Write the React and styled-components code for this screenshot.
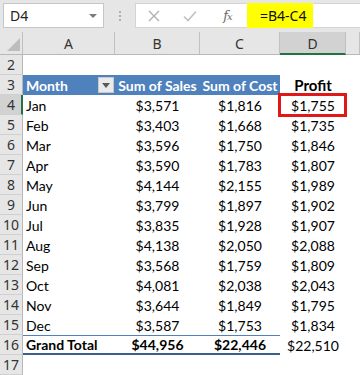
import React from "react";
import styled, { createGlobalStyle, css } from "styled-components";

const Global = createGlobalStyle`
  html, body { margin: 0; padding: 0; background: #ffffff; }
  body { width: 360px; height: 375px; overflow: hidden; font-family: "Lato", "Noto Sans", sans-serif; }
`;

const Page = styled.div`
  width: 360px;
  height: 375px;
  overflow: hidden;
  display: flex;
  flex-direction: column;
`;

const TopBar = styled.div`
  height: 36px;
  background: #e6e6e6;
  display: flex;
  align-items: flex-start;
  padding: 3px 0 0 3px;
  box-sizing: border-box;
`;

const NameBox = styled.div`
  width: 101px;
  height: 25px;
  box-sizing: border-box;
  background: #fff;
  border: 1px solid #c6c6c6;
  display: flex;
  align-items: center;
  justify-content: space-between;
  padding: 0 6px 0 6px;
  font-family: "Noto Sans", "Open Sans", sans-serif;
  font-size: 14px;
  color: #222;
`;

const Caret = styled.span`
  width: 0;
  height: 0;
  border-left: 4px solid transparent;
  border-right: 4px solid transparent;
  border-top: 4px solid #7a7a7a;
`;

const Dots = styled.div`
  width: 31px;
  height: 25px;
  display: flex;
  flex-direction: column;
  align-items: center;
  justify-content: center;
  gap: 2px;
  & > span { width: 2px; height: 2px; background: #b0b0b0; }
`;

const FormulaBar = styled.div`
  flex: 1;
  height: 25px;
  box-sizing: border-box;
  background: #fff;
  border: 1px solid #d4d4d4;
  border-right: none;
  display: flex;
  align-items: center;
`;

const IconSlot = styled.div`
  width: ${(p) => p.$w}px;
  height: 23px;
  display: flex;
  align-items: center;
  justify-content: center;
`;

const Fx = styled.span`
  font-family: "DejaVu Serif", "Liberation Serif", serif;
  font-style: italic;
  font-size: 13px;
  color: #6a6a6a;
  letter-spacing: -1px;
  & sub { font-size: 10px; vertical-align: 0; }
`;

const Formula = styled.div`
  height: 25px;
  margin-top: -1px;
  background: #ffff00;
  width: 66px;
  box-sizing: border-box;
  padding-left: 13px;
  display: flex;
  align-items: center;
  font-family: "Noto Sans", "Open Sans", sans-serif;
  font-size: 14px;
  color: #111;
`;

const Grid = styled.div`
  display: grid;
  grid-template-columns: 23px 92px 85px 80px 66px 1fr;
  grid-auto-rows: 20px;
  grid-template-rows: 23px;
  font-family: "Lato", "Noto Sans", sans-serif;
  font-size: 14px;
  color: #000;
`;

const ColHead = styled.div`
  box-sizing: border-box;
  background: ${(p) => (p.$active ? "#d2d2d2" : "#e6e6e6")};
  border-right: 1px solid #c0c0c0;
  border-bottom: ${(p) => (p.$active ? "2px solid #217346" : "1px solid #b8b8b8")};
  display: flex;
  align-items: center;
  justify-content: center;
  font-family: "Noto Sans", "Open Sans", sans-serif;
  font-size: 14px;
  color: #333;
  padding-top: 1px;
`;

const Corner = styled(ColHead)`
  justify-content: flex-end;
  align-items: flex-end;
  padding: 0 2px 3px 0;
`;

const RowHead = styled.div`
  box-sizing: border-box;
  background: ${(p) => (p.$active ? "#d2d2d2" : "#e6e6e6")};
  border-bottom: 1px solid #d0d0d0;
  border-right: ${(p) => (p.$active ? "2px solid #217346" : "1px solid #b8b8b8")};
  display: flex;
  align-items: center;
  justify-content: center;
  font-family: "Noto Sans", "Open Sans", sans-serif;
  font-size: 14px;
  color: #333;
  padding-left: ${(p) => (p.$active ? "1px" : "0")};
`;

const Cell = styled.div`
  box-sizing: border-box;
  position: relative;
  display: flex;
  align-items: center;
  white-space: nowrap;
  padding: 0 3px;
  justify-content: ${(p) => (p.$align === "left" ? "flex-start" : "center")};
  font-weight: ${(p) => (p.$bold ? 700 : 400)};
  font-size: ${(p) => (p.$big ? "15px" : "14px")};
  ${(p) =>
    p.$head &&
    css`
      background: #4f81bd;
      color: #fff;
      font-weight: 700;
    `}
  ${(p) =>
    p.$total &&
    css`
      border-top: 1px solid #4f81bd;
      border-bottom: 2px solid #3d5f8c;
    `}
  ${(p) =>
    p.$selected &&
    css`
      &::after {
        content: "";
        position: absolute;
        left: -2px;
        top: -2px;
        right: -1px;
        bottom: -2px;
        border: 3px solid #e01818;
      }
    `}
`;

const FilterBtn = styled.span`
  position: absolute;
  right: 1px;
  top: 2px;
  width: 16px;
  height: 16px;
  box-sizing: border-box;
  background: #eaeaea;
  border: 1px solid #c8c8c8;
  display: flex;
  align-items: center;
  justify-content: center;
  &::before {
    content: "";
    border-left: 4px solid transparent;
    border-right: 4px solid transparent;
    border-top: 5px solid #595959;
  }
`;

const data = [
  ["Jan", "$3,571", "$1,816", "$1,755"],
  ["Feb", "$3,403", "$1,668", "$1,735"],
  ["Mar", "$3,596", "$1,750", "$1,846"],
  ["Apr", "$3,590", "$1,783", "$1,807"],
  ["May", "$4,144", "$2,155", "$1,989"],
  ["Jun", "$3,799", "$1,897", "$1,902"],
  ["Jul", "$3,835", "$1,928", "$1,907"],
  ["Aug", "$4,138", "$2,050", "$2,088"],
  ["Sep", "$3,568", "$1,759", "$1,809"],
  ["Oct", "$4,081", "$2,038", "$2,043"],
  ["Nov", "$3,644", "$1,849", "$1,795"],
  ["Dec", "$3,587", "$1,753", "$1,834"],
];

export default function App() {
  return (
    <Page>
      <Global />
      <TopBar>
        <NameBox>
          <span>D4</span>
          <Caret />
        </NameBox>
        <Dots>
          <span />
          <span />
          <span />
        </Dots>
        <FormulaBar>
          <IconSlot $w={36}>
            <svg width="12" height="12" viewBox="0 0 12 12">
              <path d="M1 1L11 11M11 1L1 11" stroke="#b0b0b0" strokeWidth="1.4" fill="none" />
            </svg>
          </IconSlot>
          <IconSlot $w={36}>
            <svg width="14" height="12" viewBox="0 0 14 12">
              <path d="M1 6.5L5 10.5L13 1.5" stroke="#c0c0c0" strokeWidth="1.6" fill="none" />
            </svg>
          </IconSlot>
          <IconSlot $w={39}>
            <Fx>
              f<sub>x</sub>
            </Fx>
          </IconSlot>
          <Formula>=B4-C4</Formula>
        </FormulaBar>
      </TopBar>
      <Grid>
        <Corner>
          <svg width="13" height="13" viewBox="0 0 13 13">
            <path d="M13 0L13 13L0 13Z" fill="#bdbdbd" />
          </svg>
        </Corner>
        <ColHead>A</ColHead>
        <ColHead>B</ColHead>
        <ColHead>C</ColHead>
        <ColHead $active>D</ColHead>
        <ColHead />

        <RowHead>2</RowHead>
        <Cell />
        <Cell />
        <Cell />
        <Cell />
        <Cell />

        <RowHead>3</RowHead>
        <Cell $head $align="left">
          Month
          <FilterBtn />
        </Cell>
        <Cell $head>Sum of Sales</Cell>
        <Cell $head>Sum of Cost</Cell>
        <Cell $bold $big>Profit</Cell>
        <Cell />

        {data.map((r, i) => (
          <React.Fragment key={r[0]}>
            <RowHead $active={i === 0}>{i + 4}</RowHead>
            <Cell $align="left">{r[0]}</Cell>
            <Cell>{r[1]}</Cell>
            <Cell>{r[2]}</Cell>
            <Cell $selected={i === 0}>{r[3]}</Cell>
            <Cell />
          </React.Fragment>
        ))}

        <RowHead>16</RowHead>
        <Cell $total $bold $align="left">Grand Total</Cell>
        <Cell $total $bold>$44,956</Cell>
        <Cell $total $bold>$22,446</Cell>
        <Cell>$22,510</Cell>
        <Cell />

        <RowHead>17</RowHead>
        <Cell />
        <Cell />
        <Cell />
        <Cell />
        <Cell />
      </Grid>
    </Page>
  );
}
